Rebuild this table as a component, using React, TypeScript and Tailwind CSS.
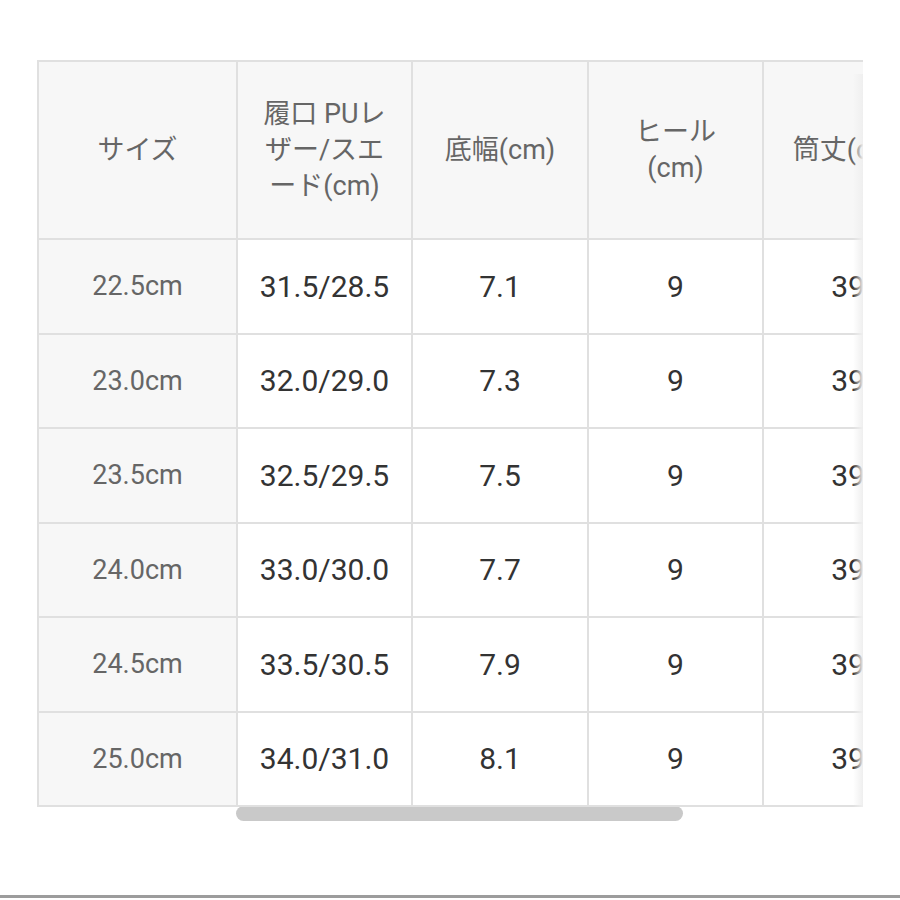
import React from "react";

const headers = ["サイズ", "履口 PUレザー/スエード(cm)", "底幅(cm)", "ヒール(cm)", "筒丈(cm)"];

const rows = [
  ["22.5cm", "31.5/28.5", "7.1", "9", "39"],
  ["23.0cm", "32.0/29.0", "7.3", "9", "39"],
  ["23.5cm", "32.5/29.5", "7.5", "9", "39"],
  ["24.0cm", "33.0/30.0", "7.7", "9", "39"],
  ["24.5cm", "33.5/30.5", "7.9", "9", "39"],
  ["25.0cm", "34.0/31.0", "8.1", "9", "39"],
];

export default function App() {
  return (
    <div
      className="w-[900px] h-[900px] bg-white flex flex-col overflow-hidden"
      style={{ fontFamily: 'Roboto, "Noto Sans CJK JP", sans-serif' }}
    >
      {/* Scrollable size table */}
      <div className="relative mt-[60px] ml-[37px] w-[826px] overflow-hidden">
        <table className="table-fixed border-collapse w-[895px]">
          <colgroup>
            <col className="w-[199px]" />
            <col className="w-[175px]" />
            <col className="w-[176px]" />
            <col className="w-[175px]" />
            <col className="w-[170px]" />
          </colgroup>
          <thead>
            <tr className="h-[178px]">
              {headers.map((h, i) => (
                <th
                  key={i}
                  className={`border-2 border-[#e0e0e0] bg-[#f7f7f7] text-[#666] font-normal text-[27px] leading-[36px] align-middle text-center ${
                    i === 1 ? "px-[20px]" : i === 3 ? "px-[40px]" : i === 4 ? "whitespace-nowrap px-[10px]" : "px-2"
                  }`}
                >
                  {h}
                </th>
              ))}
            </tr>
          </thead>
          <tbody>
            {rows.map((r, ri) => (
              <tr key={ri} className="h-[94.5px]">
                {r.map((c, ci) => (
                  <td
                    key={ci}
                    className={
                      ci === 0
                        ? "border-2 border-[#e0e0e0] bg-[#f7f7f7] text-[#666] text-[27px] text-center align-middle"
                        : "border-2 border-[#e0e0e0] bg-white text-[#333] text-[30px] text-center align-middle whitespace-nowrap"
                    }
                  >
                    {c}
                  </td>
                ))}
              </tr>
            ))}
          </tbody>
        </table>
        {/* right edge scroll shadow */}
        <div className="absolute right-0 top-[14px] bottom-0 w-[10px] bg-gradient-to-r from-transparent to-[#efefef] pointer-events-none" />
      </div>

      {/* scrollbar thumb */}
      <div className="ml-[37px] w-[826px] -mt-[1px]">
        <div className="ml-[199px] w-[447px] h-[15px] rounded-full bg-[#c9c9c9]" />
      </div>

      <div className="mt-auto mb-[2px] h-[3px] w-full bg-[#9c9c9c]" />
    </div>
  );
}
